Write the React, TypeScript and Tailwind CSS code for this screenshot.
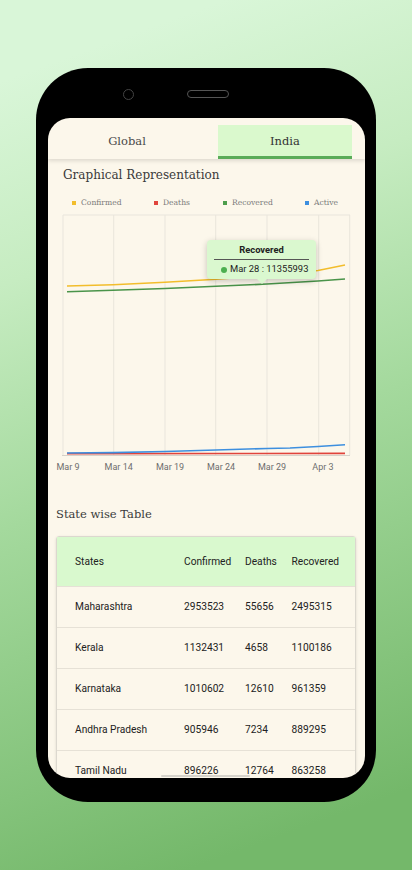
import React from "react";

const yellow: [number, number][] = [[67,286],[113,284.7],[165,282.3],[216,279.3],[267,275.5],[318,270.5],[345,265]];
const green: [number, number][] = [[67,291.7],[113,290.3],[165,288.5],[216,286.3],[267,284],[318,281],[345,279]];
const blue: [number, number][] = [[67,453],[113,452.6],[165,451.5],[216,450],[267,448.5],[290,448],[318,446.5],[345,444.7]];
const red: [number, number][] = [[67,453.6],[345,453.4]];

const pts = (a: [number, number][]) => a.map((p) => p.join(",")).join(" ");

const gridX = [63, 113.7, 165, 215.7, 267, 318.7, 349.7];
const labels: [string, number][] = [["Mar 9", 68], ["Mar 14", 118.7], ["Mar 19", 170], ["Mar 24", 221], ["Mar 29", 272], ["Apr 3", 323]];

const rows = [
  ["Maharashtra", "2953523", "55656", "2495315"],
  ["Kerala", "1132431", "4658", "1100186"],
  ["Karnataka", "1010602", "12610", "961359"],
  ["Andhra Pradesh", "905946", "7234", "889295"],
  ["Tamil Nadu", "896226", "12764", "863258"],
];

function Legend() {
  const items: [string, string, string][] = [
    ["Confirmed", "bg-[#f2bd2c]", "w-[82px]"],
    ["Deaths", "bg-[#e0443c]", "w-[69px]"],
    ["Recovered", "bg-[#4e9e4c]", "w-[82px]"],
    ["Active", "bg-[#3d8fdf]", "w-[60px]"],
  ];
  return (
    <div className="flex h-[20px] items-center pl-[24px] font-['DejaVu_Serif',serif] text-[7.6px] text-[#7a7a7a]">
      {items.map(([t, c, w]) => (
        <div key={t} className={`flex items-center ${w}`}>
          <span className={`h-[4px] w-[4px] ${c}`} />
          <span className="ml-[5px]">{t}</span>
        </div>
      ))}
    </div>
  );
}

function Chart() {
  return (
    <div className="relative h-[264px] w-[317px]">
      <svg width="317" height="264" className="block">
        <g transform="translate(-48,-213)">
          {gridX.map((x) => (
            <line key={x} x1={x} x2={x} y1={215} y2={455} stroke="#e9e5dc" strokeWidth="1" />
          ))}
          <line x1={63} x2={350} y1={215} y2={215} stroke="#e9e5dc" strokeWidth="1" />
          <line x1={62} x2={350} y1={455.5} y2={455.5} stroke="#d5d1c9" strokeWidth="1.2" />
          <polyline points={pts(yellow)} fill="none" stroke="#f2bd2c" strokeWidth="1.6" />
          <polyline points={pts(green)} fill="none" stroke="#4a944a" strokeWidth="1.6" />
          <polyline points={pts(red)} fill="none" stroke="#e0443c" strokeWidth="1.6" />
          <polyline points={pts(blue)} fill="none" stroke="#3d8fdf" strokeWidth="1.6" />
          {labels.map(([t, x]) => (
            <text key={t} x={x} y={469.5} textAnchor="middle" fontSize="9" fill="#6e6e6e" fontFamily="Roboto, sans-serif">
              {t}
            </text>
          ))}
        </g>
      </svg>
      <div className="absolute left-[159px] top-[27px] w-[109px] rounded-[4px] bg-[#daf8cf] shadow-[0_2px_6px_rgba(0,0,0,0.22)] font-[Roboto,sans-serif] text-[#222]">
        <div className="pt-[3px] text-center text-[9.4px] font-bold leading-[14px]">Recovered</div>
        <div className="mx-[7px] mt-[2px] h-px bg-[#555]" />
        <div className="flex h-[19px] items-center pl-[14px] text-[9.4px]">
          <span className="h-[6px] w-[6px] rounded-full bg-[#4caf50]" />
          <span className="ml-[3px]">Mar 28 : 11355993</span>
        </div>
        <div className="absolute left-[50px] top-full h-0 w-0 border-x-[5px] border-t-[5px] border-x-transparent border-t-[#daf8cf]" />
      </div>
    </div>
  );
}

export default function App() {
  return (
    <div className="flex h-[870px] w-[412px] justify-center overflow-hidden bg-[linear-gradient(160deg,#d9f6d8_8%,#c6ecc1_28%,#a4d99d_52%,#74b86a_92%)] pt-[68px]">
      <div className="flex h-[734px] w-[340px] flex-col rounded-[52px] bg-black pl-[12px] pr-[11px] pb-[24px]">
        <div className="flex h-[50px] shrink-0 items-center pt-[2px]">
          <div className="ml-[75px] h-[11px] w-[11px] rounded-full border-[1.5px] border-[#444]" />
          <div className="ml-[53px] h-[8px] w-[42px] rounded-full border-[1.5px] border-[#555]" />
        </div>
        <div className="relative flex-1 overflow-hidden rounded-[22px] bg-[#fcf7eb]">
          <div className="relative z-10 flex h-[41px] pt-[7px] shadow-[0_2px_4px_rgba(0,0,0,0.12)] font-['DejaVu_Serif',serif] text-[11.5px] text-[#4a4a4a]">
            <div className="flex w-[158px] items-center justify-center">Global</div>
            <div className="ml-[12px] flex w-[134px] items-center justify-center border-b-[3px] border-[#5aac58] bg-[#daf9cd] pt-[3px] text-[#333]">India</div>
          </div>
          <div className="mt-[8px] h-[16px] pl-[15px] font-['DejaVu_Serif',serif] text-[12px] leading-[16px] text-[#3a3a3a]">
            Graphical Representation
          </div>
          <div className="mt-[10px]">
            <Legend />
          </div>
          <Chart />
          <div className="mt-[27px] h-[20px] pl-[8px] font-['DejaVu_Serif',serif] text-[11.5px] leading-[20px] text-[#3a3a3a]">
            State wise Table
          </div>
          <div className="ml-[8px] mt-[12px] w-[300px] rounded-[3px] border border-[#dcd8cf] shadow-[0_1px_3px_rgba(0,0,0,0.12)] font-[Roboto,sans-serif] text-[10.2px] text-[#222]">
            <div className="flex h-[49px] items-center bg-[#d9f9ce] pl-[18px]">
              <div className="w-[109px]">States</div>
              <div className="w-[61px]">Confirmed</div>
              <div className="w-[46.6px]">Deaths</div>
              <div>Recovered</div>
            </div>
            {rows.map((r) => (
              <div key={r[0]} className="flex h-[41px] items-center border-t border-[#e6e1d6] pl-[18px]">
                <div className="w-[109px]">{r[0]}</div>
                <div className="w-[61px]">{r[1]}</div>
                <div className="w-[46.6px]">{r[2]}</div>
                <div>{r[3]}</div>
              </div>
            ))}
          </div>
          <div className="absolute bottom-[1px] left-[113px] h-[2px] w-[89px] rounded-full bg-[#d6d3cb]" />
        </div>
      </div>
    </div>
  );
}
